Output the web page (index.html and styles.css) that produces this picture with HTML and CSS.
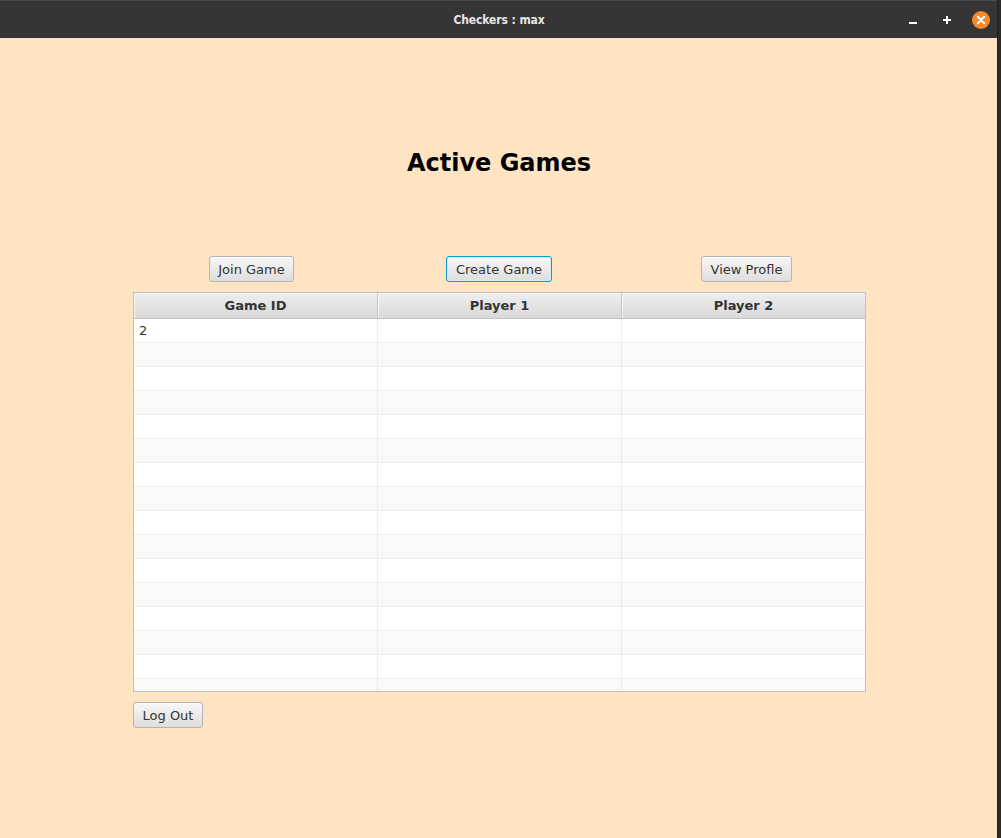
FILE: index.html
```html
<!DOCTYPE html>
<html>
<head>
<meta charset="utf-8">
<link rel="stylesheet" href="styles.css">
<title>Checkers : max</title>
</head>
<body>
<div class="window">
  <header class="titlebar">
    <span class="title">Checkers : max</span>
    <div class="controls">
      <span class="ctl ctl-min"></span>
      <span class="ctl ctl-max">
        <svg width="10" height="10" viewBox="0 0 10 10"><path d="M5 1v8M1 5h8" stroke="#fff" stroke-width="2"/></svg>
      </span>
      <span class="ctl ctl-close">
        <svg width="18" height="18" viewBox="0 0 18 18"><circle cx="9" cy="9" r="9" fill="#f28a2b"/><path d="M5.8 5.8l6.4 6.4M12.2 5.8l-6.4 6.4" stroke="#fff" stroke-width="2.2" stroke-linecap="round"/></svg>
      </span>
    </div>
  </header>
  <main class="content">
    <h1 class="heading">Active Games</h1>
    <div class="actions">
      <button class="btn btn-join">Join Game</button>
      <button class="btn btn-create focused">Create Game</button>
      <button class="btn btn-view">View Profle</button>
    </div>
    <div class="table">
      <div class="thead">
        <div class="th">Game ID</div>
        <div class="th">Player 1</div>
        <div class="th">Player 2</div>
      </div>
      <div class="tbody">
        <div class="tr"><div class="td">2</div><div class="td"></div><div class="td"></div></div>
        <div class="tr"><div class="td"></div><div class="td"></div><div class="td"></div></div>
        <div class="tr"><div class="td"></div><div class="td"></div><div class="td"></div></div>
        <div class="tr"><div class="td"></div><div class="td"></div><div class="td"></div></div>
        <div class="tr"><div class="td"></div><div class="td"></div><div class="td"></div></div>
        <div class="tr"><div class="td"></div><div class="td"></div><div class="td"></div></div>
        <div class="tr"><div class="td"></div><div class="td"></div><div class="td"></div></div>
        <div class="tr"><div class="td"></div><div class="td"></div><div class="td"></div></div>
        <div class="tr"><div class="td"></div><div class="td"></div><div class="td"></div></div>
        <div class="tr"><div class="td"></div><div class="td"></div><div class="td"></div></div>
        <div class="tr"><div class="td"></div><div class="td"></div><div class="td"></div></div>
        <div class="tr"><div class="td"></div><div class="td"></div><div class="td"></div></div>
        <div class="tr"><div class="td"></div><div class="td"></div><div class="td"></div></div>
        <div class="tr"><div class="td"></div><div class="td"></div><div class="td"></div></div>
        <div class="tr"><div class="td"></div><div class="td"></div><div class="td"></div></div>
        <div class="tr"><div class="td"></div><div class="td"></div><div class="td"></div></div>
      </div>
    </div>
    <div class="footer">
      <button class="btn btn-logout">Log Out</button>
    </div>
  </main>
</div>
</body>
</html>
```

FILE: styles.css
```css
html, body {
  margin: 0;
  padding: 0;
  background: #2b2b2b;
}
body {
  width: 1001px;
  height: 838px;
  overflow: hidden;
  font-family: "DejaVu Sans", "Liberation Sans", sans-serif;
}
.window {
  width: 997px;
  height: 838px;
  background: #ffe4c4;
  display: flex;
  flex-direction: column;
  border-right: 1px solid #1e1e1e;
}
.titlebar {
  height: 37px;
  flex: 0 0 37px;
  background: #353535;
  border-top: 1px solid #4a4a4a;
  display: flex;
  align-items: center;
  justify-content: center;
  position: relative;
}
.title {
  font-family: "DejaVu Sans Condensed", "DejaVu Sans", sans-serif;
  font-weight: bold;
  font-size: 12px;
  color: #e6e6e6;
  letter-spacing: -0.1px;
  margin-left: 1px;
}
.controls {
  position: absolute;
  right: 7px;
  top: 0;
  height: 37px;
  display: flex;
  align-items: center;
}
.ctl {
  display: flex;
  align-items: center;
  justify-content: center;
}
.ctl-min {
  width: 8px;
  height: 2px;
  background: #fff;
  margin-top: 6px;
  margin-right: 25px;
}
.ctl-max {
  width: 10px;
  height: 10px;
  margin-right: 20px;
}
.ctl-close {
  width: 18px;
  height: 18px;
}
.content {
  flex: 1;
  display: flex;
  flex-direction: column;
  padding: 0 132px 0 133px;
}
.heading {
  margin: 111px 0 0 0;
  height: 28px;
  line-height: 28px;
  font-size: 24px;
  font-weight: bold;
  text-align: center;
  color: #000;
}
.actions {
  margin-top: 79px;
  display: flex;
  align-items: center;
  padding-left: 76px;
  height: 26px;
}
.btn {
  height: 26px;
  box-sizing: border-box;
  padding: 1px 0 0 0;
  font-family: "DejaVu Sans", sans-serif;
  font-size: 13px;
  color: #333;
  border: 1px solid #b4b4b4;
  border-radius: 3px;
  background: linear-gradient(#f7f7f7, #dedede);
  box-shadow: inset 0 1px 0 #fdfdfd;
  line-height: 23px;
  text-align: center;
}
.btn-join { width: 85px; }
.btn-create { width: 106px; margin-left: 152px; }
.btn-view { width: 91px; margin-left: 149px; }
.focused {
  border-color: #039ed3;
  box-shadow: inset 0 0 0 1px #d7eef7;
}
.table {
  margin-top: 10px;
  width: 733px;
  height: 400px;
  box-sizing: border-box;
  border: 1px solid #c0c0c0;
  background: #fff;
  overflow: hidden;
}
.thead {
  display: grid;
  grid-template-columns: 244px 244px 243px;
  height: 26px;
  box-sizing: border-box;
  border-bottom: 1px solid #c2c2c2;
  background: linear-gradient(#eeeeee, #d9d9d9);
}
.th {
  font-size: 13px;
  font-weight: bold;
  color: #333;
  text-align: center;
  padding-top: 1px;
  line-height: 24px;
  border-right: 1px solid #c6c6c6;
  box-shadow: inset 1px 1px 0 #f6f6f6;
}
.th:last-child { border-right: 0; }
.tr {
  display: grid;
  grid-template-columns: 244px 244px 243px;
  height: 24px;
  box-sizing: border-box;
  border-bottom: 1px solid #eeeeee;
  background: #fff;
}
.tr:nth-child(even) { background: #f9f9f9; }
.td {
  font-size: 13px;
  color: #333;
  padding-left: 5px;
  line-height: 23px;
  border-right: 1px solid #ececec;
}
.td:last-child { border-right: 0; }
.footer {
  margin-top: 10px;
  display: flex;
}
.btn-logout { width: 70px; }
```
